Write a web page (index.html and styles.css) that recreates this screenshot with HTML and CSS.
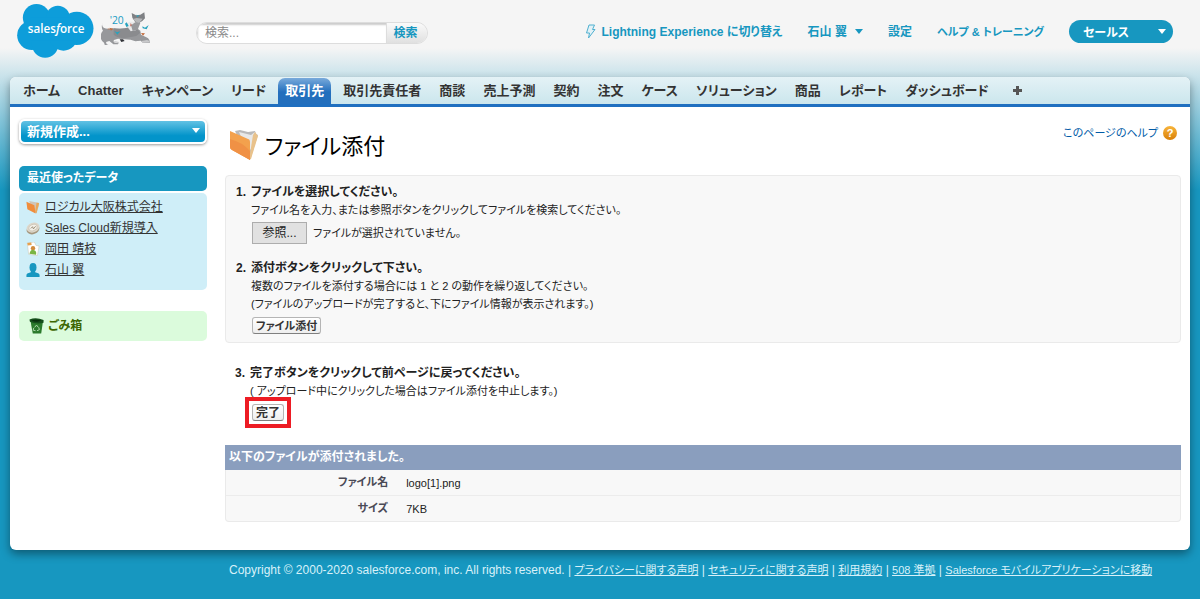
FILE: index.html
```html
<!DOCTYPE html>
<html lang="ja">
<head>
    <meta charset="UTF-8">
    <meta name="viewport" content="width=device-width, initial-scale=1.0">
    <title>ファイル添付</title>
    <link rel="stylesheet" href="styles.css">
</head>
<body>
    <header class="header">
        <svg class="logo" viewBox="50 10 230 162" role="img" aria-label="salesforce">
            <g fill="#0d9dda">
                <circle cx="108" cy="51" r="41"/>
                <circle cx="172" cy="51" r="36"/>
                <circle cx="229" cy="83" r="50"/>
                <circle cx="94" cy="104" r="44"/>
                <circle cx="134" cy="131" r="40"/>
                <circle cx="189" cy="108" r="42"/>
                <path d="M90 50h130v70H90z"/>
            </g>
            <text class="logo-text" x="82" y="97">sales<tspan font-style="italic">f</tspan>orce</text>
        </svg>
        <svg class="mascot" viewBox="300 32 150 102" aria-hidden="true">
            <path d="M304 68q-3 8 4 14q8 4 16 3q12-2 22 0q24 2 40-4l18 0 14 10 2 12 16 8q6 2 9 8l2 8h-22l-6-6-16 2-14-5-38-3-12 4q-4 6 4 8l10 2-2 3h-14l-12-10-10 3 2 7 8 3-2 4h-10l-4-12q-10-6-10-18q0-12 7-18q-6-8-2-23z" fill="#97989b"/>
            <path d="M338 84q28 4 46-3l22 2 12 14-12 10-32 6q-26 0-36-10z" fill="#8a8b8e"/>
            <path d="M374 71l12-7 18 0 6 12-5 14-16 3-10-14z" fill="#e9e9ea"/>
            <path d="M390 75l14-10 14 3-8 20-15 4z" fill="#98999c"/>
            <path d="M392 38l13 7 13-2 12-7 2 18-8 8-10 6-12-4-8-12z" fill="#7f8184"/>
            <path d="M395 56l12-3 18 2-6 8-6 5-10-5z" fill="#b6b7b9"/>
            <path d="M422 122l16-3 8 3-2 4-20 1zM340 122l14 3-2 4-12-4z" fill="#c9c9cb"/>
            <path d="M356 117l10 0 5 5-10 3z" fill="#303237"/>
            <path d="M326 82l9 4-5 5zM420 98l12 1-6 7z" fill="#c56d3e"/>
            <path d="M320 85h16v2h-16z" fill="#c56d3e"/>
            <path d="M340 92l8 4 10-3-9 10zM424 78l8 4 11-8-6 13-12-3zM372 70l5-4 6 11-7 3zM404 41l4 5 8-2-7 7z" fill="#27a3bf"/>
            <path d="M389 68l3 6-4 5z" fill="#b5432c"/>
            <text class="mascot-text" x="326" y="71">'20</text>
        </svg>
        <form class="search">
            <input class="search-input" type="text" placeholder="検索..." aria-label="検索">
            <button class="search-btn" type="button">検索</button>
        </form>
        <nav class="user-links">
            <a class="lightning" href="#">
                <svg class="bolt" viewBox="0 0 11 15" aria-hidden="true"><path d="M4 1h5.500L7.500 5.500H10L3.500 14 4.500 9H1.500z"/></svg>
                Lightning Experience に切り替え
            </a>
            <a class="user" href="#">石山 翼 <span class="arrow"></span></a>
            <a class="setup" href="#">設定</a>
            <a class="help-link" href="#">ヘルプ &amp; トレーニング</a>
            <button class="app-menu" type="button">セールス <span class="arrow"></span></button>
        </nav>
    </header>

    <div class="page">
        <nav class="tabs">
            <a href="#">ホーム</a>
            <a href="#">Chatter</a>
            <a href="#">キャンペーン</a>
            <a href="#">リード</a>
            <a class="active" href="#">取引先</a>
            <a href="#">取引先責任者</a>
            <a href="#">商談</a>
            <a href="#">売上予測</a>
            <a href="#">契約</a>
            <a href="#">注文</a>
            <a href="#">ケース</a>
            <a href="#">ソリューション</a>
            <a href="#">商品</a>
            <a href="#">レポート</a>
            <a href="#">ダッシュボード</a>
            <a class="all-tabs" href="#" aria-label="すべてのタブ"><svg viewBox="0 0 9 9" aria-hidden="true"><path d="M3 0h3v3h3v3H6v3H3V6H0V3h3z"/></svg></a>
        </nav>

        <div class="content">
            <aside class="sidebar">
                <button class="create" type="button">新規作成... <span class="arrow"></span></button>

                <section class="recent">
                    <h2>最近使ったデータ</h2>
                    <ul>
                        <li>
                            <svg viewBox="0 0 32 32" aria-hidden="true"><path d="M7 2l21 4 2 5-6 20-6-3z" fill="#cfc5b8"/><path d="M24 6l6 1-6 23-3-3z" fill="#e9a95b"/><path d="M1 4l18 8 3 19L3 21z" fill="#f08d3c"/></svg>
                            <a href="#">ロジカル大阪株式会社</a>
                        </li>
                        <li>
                            <svg viewBox="0 0 32 32" aria-hidden="true"><ellipse cx="16" cy="19" rx="15" ry="11" transform="rotate(-20 16 19)" fill="#a5977f"/><ellipse cx="16" cy="15" rx="15" ry="11" transform="rotate(-20 16 15)" fill="#ddd7cb"/><ellipse cx="16" cy="15" rx="10" ry="7" transform="rotate(-20 16 15)" fill="#f3f0e9" stroke="#b4aa98"/><path d="M11 17l4-4 2 5 5-6" fill="none" stroke="#91856e" stroke-width="2"/></svg>
                            <a href="#">Sales Cloud新規導入</a>
                        </li>
                        <li>
                            <svg viewBox="0 0 32 32" aria-hidden="true"><path d="M3 2l16-2 4 8 7 1-4 22-20-3z" fill="#fff" stroke="#c3bda9"/><path d="M3 2l9-1 1 6-9 1z" fill="#e6a04d"/><circle cx="16" cy="14" r="5" fill="#d18b3e"/><path d="M8 27q2-10 9-9 8 1 6 11z" fill="#79b543"/></svg>
                            <a href="#">岡田 靖枝</a>
                        </li>
                        <li>
                            <svg viewBox="0 0 32 32" aria-hidden="true"><ellipse cx="16" cy="10" rx="8" ry="10" fill="#1797c0"/><path d="M11 15h10v6l8 3q3 2 2 8H1q-1-6 2-8l8-3z" fill="#1797c0"/></svg>
                            <a href="#">石山 翼</a>
                        </li>
                    </ul>
                </section>

                <a class="trash" href="#">
                    <svg viewBox="0 0 32 34" aria-hidden="true"><path d="M3 5l27 1-4 27H8z" fill="#2b7a2c"/><path d="M1 3q14-5 30 1v6Q16 14 2 8z" fill="#164f1c"/><path d="M5 5q11-3 22 1-11 4-22-1z" fill="#082d0d"/><path d="M12 20l4-5 4 5M21 20l1 5-5 2M14 27l-5-1 1-5" fill="none" stroke="#b5dcb2" stroke-width="2"/></svg>
                    ごみ箱
                </a>
            </aside>

            <main class="main">
                <div class="title-row">
                    <svg class="folder" viewBox="0 0 30 32" aria-hidden="true">
                        <path d="M6 2l5-1 8 2 7-1 1 3 2 1-7 22-3 2z" fill="#b9b9ba"/>
                        <path d="M10 3l12 3 4-3-2 14-5 7z" fill="#e8e8e8"/>
                        <path d="M26 3l3 4-7 23-2 1 4-25z" fill="#e9c28b"/>
                        <path d="M1 2l18 8c1 0 2 1 2 3v18L3 21q-2-1-2-3z" fill="#f3a14d"/>
                        <path d="M1 10q12 3 20 12v9L3 21q-2-1-2-3z" fill="#f09145"/>
                    </svg>
                    <h1>ファイル添付</h1>
                    <a class="page-help" href="#">このページのヘルプ <span class="help-icon">?</span></a>
                </div>

                <form>
                    <div class="panel">
                        <div class="step">
                            <span class="num">1.</span>
                            <div>
                                <h3>ファイルを選択してください。</h3>
                                <p>ファイル名を入力、または参照ボタンをクリックしてファイルを検索してください。</p>
                                <div class="file-row">
                                    <input class="file-input" type="file" id="file">
                                    <label class="browse" for="file">参照...</label>
                                    <span>ファイルが選択されていません。</span>
                                </div>
                            </div>
                        </div>
                        <div class="step">
                            <span class="num">2.</span>
                            <div>
                                <h3>添付ボタンをクリックして下さい。</h3>
                                <p>複数のファイルを添付する場合には 1 と 2 の動作を繰り返してください。</p>
                                <p>(ファイルのアップロードが完了すると、下にファイル情報が表示されます。)</p>
                                <button class="btn" type="button">ファイル添付</button>
                            </div>
                        </div>
                    </div>
                    <div class="step last-step">
                        <span class="num">3.</span>
                        <div>
                            <h3>完了ボタンをクリックして前ページに戻ってください。</h3>
                            <p>( アップロード中にクリックした場合はファイル添付を中止します。)</p>
                            <div class="marked"><button class="btn" type="button">完了</button></div>
                        </div>
                    </div>
                </form>

                <table class="files">
                    <caption>以下のファイルが添付されました。</caption>
                    <tr>
                        <th scope="row">ファイル名</th>
                        <td>logo[1].png</td>
                    </tr>
                    <tr>
                        <th scope="row">サイズ</th>
                        <td>7KB</td>
                    </tr>
                </table>
            </main>
        </div>
    </div>

    <footer class="footer">
        Copyright © 2000-2020 salesforce.com, inc. All rights reserved. |
        <a href="#">プライバシーに関する声明</a> |
        <a href="#">セキュリティに関する声明</a> |
        <a href="#">利用規約</a> |
        <a href="#">508 準拠</a> |
        <a href="#">Salesforce モバイルアプリケーションに移動</a>
    </footer>
</body>
</html>
```
FILE: styles.css
```css
* {
    box-sizing: border-box;
}
body {
    margin: 0;
    min-height: 100vh;
    font-family: "Liberation Sans", "Noto Sans CJK JP", sans-serif;
    font-feature-settings: "palt";
    font-size: 12px;
    line-height: 18px;
    color: #222;
    background: #1797c0 linear-gradient(#f5f5f5 0, #f5f5f5 48px, #1797c0 190px) no-repeat;
}
h1, h2, h3, p, ul {
    margin: 0;
    padding: 0;
}
button, input {
    font-family: inherit;
    font-feature-settings: inherit;
}
button, label {
    cursor: pointer;
}
.arrow {
    display: inline-block;
    border: 4px solid transparent;
    border-top: 5px solid currentColor;
    border-bottom: 0;
}

/* header */
.header {
    display: flex;
    align-items: flex-start;
    height: 77px;
    padding: 4px 27px 0 17px;
}
.logo {
    width: 77px;
    height: 54px;
}
.logo-text {
    font-family: "Open Sans", sans-serif;
    font-size: 35px;
    font-weight: 600;
    fill: #fff;
}
.mascot {
    width: 50px;
    height: 34px;
    margin: 7px 0 0 7px;
}
.mascot-text {
    font-family: "Open Sans", sans-serif;
    font-size: 31px;
    fill: #1b9cc4;
}
.search {
    display: flex;
    width: 232px;
    height: 22px;
    margin: 18px 0 0 45px;
    border: 1px solid #ddd;
    border-radius: 11px;
    overflow: hidden;
}
.search-input {
    flex: 1;
    min-width: 0;
    padding: 0 8px;
    border: 0;
    font-size: 12px;
    background: #fff;
    box-shadow: inset 1px 2px 2px #ccc;
}
.search-input::placeholder {
    color: #888;
}
.search-btn {
    width: 41px;
    padding: 0 3px 3px 0;
    border: 0;
    border-left: 1px solid #ddd;
    font-size: 12px;
    font-weight: bold;
    color: #1797c0;
    background: linear-gradient(#fafafa, #e0e0e0);
}
.user-links {
    display: flex;
    align-items: center;
    gap: 25px;
    margin: 16px 0 0 auto;
}
.user-links a {
    display: flex;
    align-items: center;
    font-weight: bold;
    color: #1797c0;
    text-decoration: none;
}
.user-links .help-link {
    font-size: 11px;
}
.bolt {
    width: 11px;
    height: 15px;
    margin-right: 5px;
    fill: #e3f2f7;
    stroke: #4fb0d0;
}
.user .arrow {
    margin-left: 8px;
}
.app-menu {
    display: flex;
    align-items: center;
    justify-content: space-between;
    width: 104px;
    height: 23px;
    padding: 0 7px 0 14px;
    border: 0;
    border-radius: 12px;
    font-size: 12px;
    font-weight: bold;
    color: #fff;
    background: #1797c0;
}

/* page card and tabs */
.page {
    margin: 0 10px;
    border-radius: 6px;
    background: #fff;
    box-shadow: 0 4px 10px rgba(0, 0, 0, 0.4);
}
.tabs {
    display: flex;
    height: 30px;
    padding: 1px 4px 0;
    border-bottom: 3px solid #1f6fc0;
    border-radius: 6px 6px 0 0;
    background: linear-gradient(#e4f2f6, #cbe6ed);
}
.tabs a {
    padding: 0 9px;
    font-size: 13px;
    font-weight: bold;
    line-height: 26px;
    color: #333;
    text-decoration: none;
    white-space: nowrap;
}
.tabs .active {
    margin: 0 3px;
    padding: 0 7px;
    border-radius: 7px 7px 0 0;
    color: #fff;
    background: linear-gradient(#79aadb, #236fbd 14px);
}
.tabs .all-tabs {
    padding: 0 15px;
}
.all-tabs svg {
    width: 9px;
    height: 9px;
    fill: #555;
}
.content {
    display: flex;
    gap: 18px;
    padding: 12px 9px 28px;
}

/* sidebar */
.sidebar {
    width: 188px;
}
.create {
    display: flex;
    align-items: center;
    justify-content: space-between;
    width: 100%;
    height: 25px;
    padding: 0 5px 2px 6px;
    border: 2px solid #fff;
    border-radius: 6px;
    font-size: 13px;
    font-weight: bold;
    color: #fff;
    background: linear-gradient(#62c2e4, #0394ca 70%);
    box-shadow: 0 1px 3px rgba(0, 0, 0, 0.4);
}
.recent {
    margin: 22px 0 21px;
}
.recent h2 {
    height: 25px;
    padding-left: 8px;
    border-radius: 5px;
    font-size: 12px;
    line-height: 24px;
    color: #fff;
    background: #1797c0;
}
.recent ul {
    height: 97px;
    margin-top: 2px;
    padding: 3px 7px;
    border-radius: 5px;
    list-style: none;
    background: #cfeef8;
}
.recent li {
    display: flex;
    align-items: center;
    gap: 5px;
    height: 21px;
}
.recent li svg {
    width: 14px;
    height: 14px;
}
.recent a {
    font-size: 12px;
    color: #333;
}
.trash {
    display: flex;
    align-items: center;
    gap: 4px;
    height: 30px;
    padding-left: 10px;
    border-radius: 5px;
    font-weight: bold;
    color: #3c6600;
    text-decoration: none;
    background: #dbfbdc;
}
.trash svg {
    width: 15px;
    height: 16px;
}

/* main column */
.main {
    flex: 1;
}
.title-row {
    display: flex;
    align-items: center;
    height: 56px;
    padding: 0 4px;
}
.folder {
    width: 30px;
    height: 32px;
    margin-bottom: 4px;
}
h1 {
    margin-left: 6px;
    font-size: 22px;
    font-weight: normal;
    line-height: 32px;
    color: #000;
}
.page-help {
    display: flex;
    align-self: flex-start;
    align-items: center;
    gap: 5px;
    margin: 5px 0 0 auto;
    font-size: 11px;
    color: #015ba7;
    text-decoration: none;
}
.help-icon {
    width: 14px;
    height: 14px;
    border-radius: 50%;
    font-size: 11px;
    font-weight: bold;
    line-height: 14px;
    text-align: center;
    color: #fff;
    background: linear-gradient(#f8b53c, #d97f06);
}
.panel {
    padding: 7px 10px 8px;
    border: 1px solid #eaeaea;
    border-radius: 4px;
    background: #f8f8f8;
}
.step {
    display: flex;
    font-size: 11px;
}
.panel .step + .step {
    margin-top: 15px;
}
.num {
    width: 15px;
    font-size: 12px;
    font-weight: bold;
}
h3 {
    font-size: 12px;
}
.file-row {
    display: flex;
    align-items: center;
    gap: 6px;
    margin: 3px 1px 0;
}
.file-input {
    position: absolute;
    width: 1px;
    height: 1px;
    opacity: 0;
}
.browse {
    width: 55px;
    height: 22px;
    border: 1px solid #adadad;
    font-size: 12px;
    line-height: 20px;
    text-align: center;
    background: #e1e1e1;
}
.btn {
    display: block;
    height: 17px;
    margin: 4px 1px 0;
    padding: 0 3px;
    border: 1px solid #b5b5b5;
    border-bottom-color: #7f7f7f;
    border-radius: 3px;
    font-size: 11px;
    font-weight: bold;
    line-height: 14px;
    color: #333;
    background: linear-gradient(#fff, #eee);
}
.last-step {
    padding: 21px 10px 17px;
}
.marked {
    width: fit-content;
    margin: -3px 0 0 -5px;
    padding: 3px;
    border: 4px solid #ed1c24;
}
.marked .btn {
    margin: 0;
    font-size: 12px;
}
.files {
    width: 100%;
    border: 1px solid #eaeaea;
    border-top: 0;
    border-radius: 0 0 4px 4px;
    border-spacing: 0;
    background: #f8f8f8;
}
.files caption {
    padding-left: 4px;
    font-size: 12px;
    font-weight: bold;
    line-height: 25px;
    text-align: left;
    color: #fff;
    background: #8a9ebe;
}
.files th {
    width: 17%;
    padding: 0;
    font-size: 11px;
    line-height: 25px;
    text-align: right;
    color: #4a4a56;
}
.files td {
    padding: 0 0 0 18px;
    font-size: 11px;
}
.files tr + tr th,
.files tr + tr td {
    border-top: 1px solid #ececec;
}

/* footer */
.footer {
    padding: 11px 20px 20px 229px;
    color: #d8f1f9;
    white-space: nowrap;
}
.footer a {
    font-size: 11px;
    color: inherit;
}
```
